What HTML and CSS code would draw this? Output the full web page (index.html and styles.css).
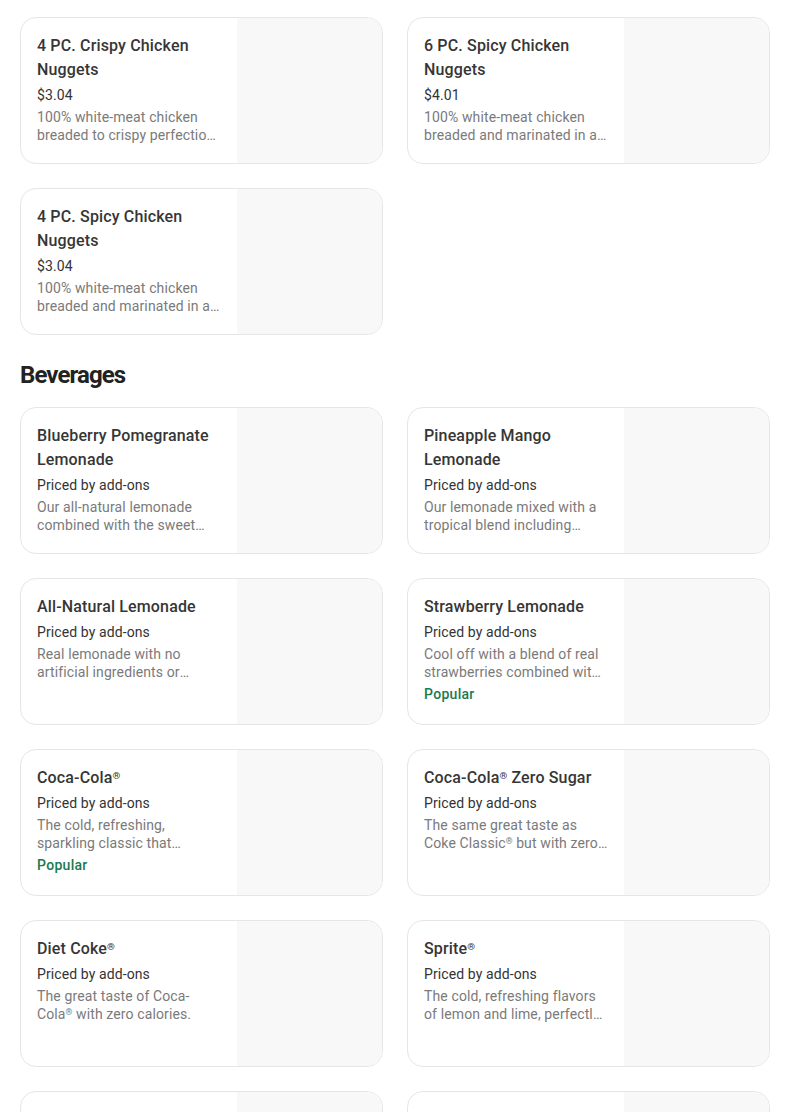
FILE: index.html
```html
<!DOCTYPE html>
<html lang="en">
<head>
<meta charset="utf-8">
<title>Menu</title>
<link rel="stylesheet" href="styles.css">
</head>
<body>
<main class="page">
  <section class="section">
    <div class="grid">
      <div class="card">
        <div class="info">
          <div class="title">4 PC. Crispy Chicken Nuggets</div>
          <div class="price">$3.04</div>
          <div class="desc">100% white-meat chicken breaded to crispy perfection and served hot.</div>
        </div>
        <div class="thumb"></div>
      </div>
      <div class="card">
        <div class="info">
          <div class="title">6 PC. Spicy Chicken Nuggets</div>
          <div class="price">$4.01</div>
          <div class="desc">100% white-meat chicken breaded and marinated in a spicy blend.</div>
        </div>
        <div class="thumb"></div>
      </div>
      <div class="card">
        <div class="info">
          <div class="title">4 PC. Spicy Chicken Nuggets</div>
          <div class="price">$3.04</div>
          <div class="desc">100% white-meat chicken breaded and marinated in a spicy blend.</div>
        </div>
        <div class="thumb"></div>
      </div>
    </div>
  </section>

  <section class="section">
    <h2 class="heading">Beverages</h2>
    <div class="grid">
      <div class="card">
        <div class="info">
          <div class="title">Blueberry Pomegranate Lemonade</div>
          <div class="price">Priced by add-ons</div>
          <div class="desc">Our all-natural lemonade combined with the sweet flavors of blueberry and pomegranate.</div>
        </div>
        <div class="thumb"></div>
      </div>
      <div class="card">
        <div class="info">
          <div class="title">Pineapple Mango Lemonade</div>
          <div class="price">Priced by add-ons</div>
          <div class="desc">Our lemonade mixed with a tropical blend including pineapple and mango.</div>
        </div>
        <div class="thumb"></div>
      </div>
      <div class="card">
        <div class="info">
          <div class="title">All-Natural Lemonade</div>
          <div class="price">Priced by add-ons</div>
          <div class="desc">Real lemonade with no artificial ingredients or preservatives.</div>
        </div>
        <div class="thumb"></div>
      </div>
      <div class="card">
        <div class="info">
          <div class="title">Strawberry Lemonade</div>
          <div class="price">Priced by add-ons</div>
          <div class="desc">Cool off with a blend of real strawberries combined with our all-natural lemonade.</div>
          <div class="tag">Popular</div>
        </div>
        <div class="thumb"></div>
      </div>
      <div class="card">
        <div class="info">
          <div class="title">Coca-Cola<span class="reg">®</span></div>
          <div class="price">Priced by add-ons</div>
          <div class="desc">The cold, refreshing, sparkling classic that America loves.</div>
          <div class="tag">Popular</div>
        </div>
        <div class="thumb"></div>
      </div>
      <div class="card">
        <div class="info">
          <div class="title">Coca-Cola<span class="reg">®</span> Zero Sugar</div>
          <div class="price">Priced by add-ons</div>
          <div class="desc">The same great taste as Coke Classic<span class="reg">®</span> but with zero calories.</div>
        </div>
        <div class="thumb"></div>
      </div>
      <div class="card">
        <div class="info">
          <div class="title">Diet Coke<span class="reg">®</span></div>
          <div class="price">Priced by add-ons</div>
          <div class="desc">The great taste of Coca-Cola<span class="reg">®</span> with zero calories.</div>
        </div>
        <div class="thumb"></div>
      </div>
      <div class="card">
        <div class="info">
          <div class="title">Sprite<span class="reg">®</span></div>
          <div class="price">Priced by add-ons</div>
          <div class="desc">The cold, refreshing flavors of lemon and lime, perfectly blended.</div>
        </div>
        <div class="thumb"></div>
      </div>
      <div class="card">
        <div class="info">
          <div class="title">Dr Pepper<span class="reg">®</span></div>
          <div class="price">Priced by add-ons</div>
          <div class="desc">A unique blend of 23 flavors.</div>
        </div>
        <div class="thumb"></div>
      </div>
      <div class="card">
        <div class="info">
          <div class="title">Fanta<span class="reg">®</span> Orange</div>
          <div class="price">Priced by add-ons</div>
          <div class="desc">Bright, bubbly and popular orange soda.</div>
        </div>
        <div class="thumb"></div>
      </div>
    </div>
  </section>
</main>
</body>
</html>
```

FILE: styles.css
```css
* {
  box-sizing: border-box;
}

html, body {
  margin: 0;
  padding: 0;
  background: #ffffff;
}

body {
  font-family: Roboto, "Liberation Sans", Arial, sans-serif;
  color: #333333;
  -webkit-font-smoothing: antialiased;
}

.page {
  padding: 17px 34px 0 20px;
}

.section + .section {
  margin-top: 24px;
}

.heading {
  margin: 0 0 16px 0;
  font-size: 24px;
  line-height: 32px;
  font-weight: 700;
  letter-spacing: -0.9px;
  color: #222222;
}

.grid {
  display: grid;
  grid-template-columns: 363px 363px;
  column-gap: 24px;
  row-gap: 24px;
}

.card {
  display: flex;
  height: 147px;
  border: 1px solid #e6e6e6;
  border-radius: 16px;
  overflow: hidden;
  background: #ffffff;
}

.info {
  flex: 1;
  min-width: 0;
  padding: 16px 16px 0 16px;
}

.title {
  font-size: 16px;
  line-height: 24px;
  font-weight: 500;
  letter-spacing: 0.15px;
  color: #363636;
}

.price {
  margin-top: 3px;
  font-size: 14px;
  line-height: 20px;
  font-weight: 400;
  letter-spacing: 0.1px;
  color: #333333;
}

.desc {
  margin-top: 3px;
  font-size: 14px;
  line-height: 18px;
  letter-spacing: 0.12px;
  color: #7a7a7a;
  display: -webkit-box;
  -webkit-box-orient: vertical;
  -webkit-line-clamp: 2;
  overflow: hidden;
}

.reg {
  font-size: 0.62em;
  vertical-align: 0.45em;
  line-height: 0;
  letter-spacing: 0;
}

.tag {
  margin-top: 3px;
  font-size: 14px;
  line-height: 20px;
  font-weight: 500;
  letter-spacing: 0.3px;
  color: #1a7a50;
}

.thumb {
  flex: 0 0 145px;
  background: #f8f8f8;
}
```
